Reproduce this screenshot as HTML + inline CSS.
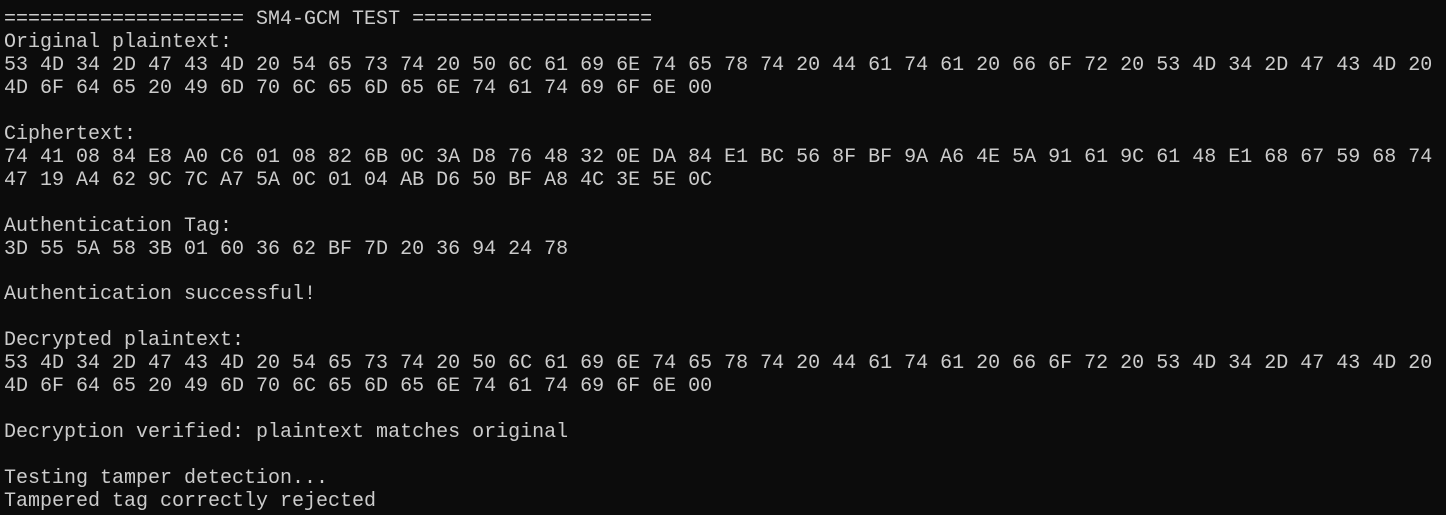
<!DOCTYPE html>
<html><head><meta charset="utf-8"><style>
html,body{margin:0;padding:0;background:#0c0c0c;width:1446px;height:515px;overflow:hidden}
pre{margin:0;position:absolute;left:4px;top:9px;font-family:"Liberation Mono","DejaVu Sans Mono",monospace;font-size:20px;line-height:22.95px;color:#cccccc;white-space:pre}
</style></head><body><pre>==================== SM4-GCM TEST ====================
Original plaintext:
53 4D 34 2D 47 43 4D 20 54 65 73 74 20 50 6C 61 69 6E 74 65 78 74 20 44 61 74 61 20 66 6F 72 20 53 4D 34 2D 47 43 4D 20
4D 6F 64 65 20 49 6D 70 6C 65 6D 65 6E 74 61 74 69 6F 6E 00

Ciphertext:
74 41 08 84 E8 A0 C6 01 08 82 6B 0C 3A D8 76 48 32 0E DA 84 E1 BC 56 8F BF 9A A6 4E 5A 91 61 9C 61 48 E1 68 67 59 68 74
47 19 A4 62 9C 7C A7 5A 0C 01 04 AB D6 50 BF A8 4C 3E 5E 0C

Authentication Tag:
3D 55 5A 58 3B 01 60 36 62 BF 7D 20 36 94 24 78

Authentication successful!

Decrypted plaintext:
53 4D 34 2D 47 43 4D 20 54 65 73 74 20 50 6C 61 69 6E 74 65 78 74 20 44 61 74 61 20 66 6F 72 20 53 4D 34 2D 47 43 4D 20
4D 6F 64 65 20 49 6D 70 6C 65 6D 65 6E 74 61 74 69 6F 6E 00

Decryption verified: plaintext matches original

Testing tamper detection...
Tampered tag correctly rejected</pre></body></html>
